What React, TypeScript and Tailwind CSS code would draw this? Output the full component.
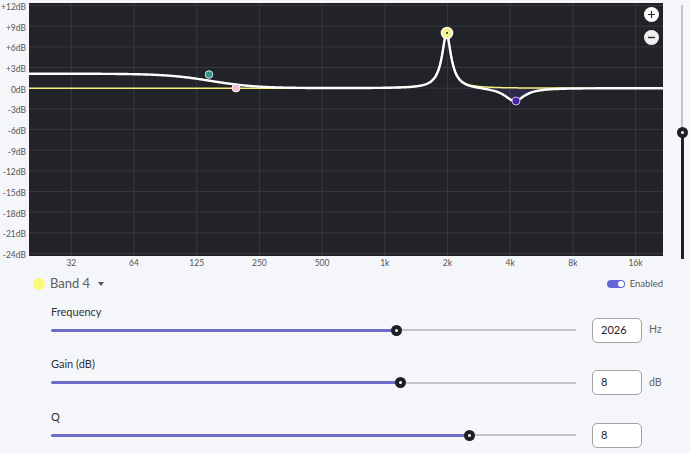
import React from "react";

const FS = 48000;
const W = 634;
const H = 253;

type Coefs = [number, number, number, number, number, number];

function peaking(f0: number, g: number, q: number): Coefs {
  const A = Math.pow(10, g / 40);
  const w0 = (2 * Math.PI * f0) / FS;
  const alpha = Math.sin(w0) / (2 * q);
  const c = Math.cos(w0);
  return [1 + alpha * A, -2 * c, 1 - alpha * A, 1 + alpha / A, -2 * c, 1 - alpha / A];
}

function lowShelf(f0: number, g: number): Coefs {
  const A = Math.pow(10, g / 40);
  const w0 = (2 * Math.PI * f0) / FS;
  const c = Math.cos(w0);
  const alpha = (Math.sin(w0) / 2) * Math.SQRT2;
  const sa = 2 * Math.sqrt(A) * alpha;
  return [
    A * (A + 1 - (A - 1) * c + sa),
    2 * A * (A - 1 - (A + 1) * c),
    A * (A + 1 - (A - 1) * c - sa),
    A + 1 + (A - 1) * c + sa,
    -2 * (A - 1 + (A + 1) * c),
    A + 1 + (A - 1) * c - sa,
  ];
}

function magDb([b0, b1, b2, a0, a1, a2]: Coefs, f: number) {
  const w = (2 * Math.PI * f) / FS;
  const c1 = Math.cos(w), s1 = Math.sin(w);
  const c2 = Math.cos(2 * w), s2 = Math.sin(2 * w);
  const nr = b0 + b1 * c1 + b2 * c2;
  const ni = -(b1 * s1 + b2 * s2);
  const dr = a0 + a1 * c1 + a2 * c2;
  const di = -(a1 * s1 + a2 * s2);
  return 10 * Math.log10((nr * nr + ni * ni) / (dr * dr + di * di));
}

// chart mapping
const xToF = (x: number) => 32 * Math.pow(2, (x - 42.3) / 62.7);
const dbToY = (db: number) => 2.5 + (12 - db) * 6.89;

const bands: Coefs[] = [lowShelf(150, 2.1), peaking(2026, 8, 8), peaking(4300, -1.9, 3.5)];

function curve(filters: Coefs[]) {
  let d = "";
  for (let x = 0; x <= W; x += 1) {
    const f = xToF(x);
    const db = filters.reduce((s, c) => s + magDb(c, f), 0);
    d += (x === 0 ? "M" : "L") + x + " " + dbToY(db).toFixed(2) + " ";
  }
  return d;
}

const dbLabels = ["+12dB", "+9dB", "+6dB", "+3dB", "0dB", "-3dB", "-6dB", "-9dB", "-12dB", "-15dB", "-18dB", "-21dB", "-24dB"];
const freqLabels = ["32", "64", "125", "250", "500", "1k", "2k", "4k", "8k", "16k"];

function Chart() {
  const total = curve(bands);
  const band4 = curve([bands[1]]);
  const purple = curve([bands[2]]);
  return (
    <div className="relative w-[634px] h-[253px] bg-[#212328]">
      <svg width={W} height={H} className="block">
        {dbLabels.map((_, i) => (
          <line key={i} x1={0} x2={W} y1={2.5 + i * 20.67} y2={2.5 + i * 20.67} stroke="#36383d" strokeWidth={1} />
        ))}
        {freqLabels.map((_, i) => (
          <line key={i} x1={42.3 + i * 62.7} x2={42.3 + i * 62.7} y1={0} y2={H} stroke="#36383d" strokeWidth={1} />
        ))}
        <path d={purple + `L${W} ${dbToY(0)} L0 ${dbToY(0)} Z`} fill="#5b3aa6" opacity={0.25} />
        <path d={band4} fill="none" stroke="#f3ef7a" strokeWidth={1.5} />
        <path d={total} fill="none" stroke="#ffffff" strokeWidth={2.4} strokeLinejoin="round" />
        <circle cx={180} cy={71.5} r={3.8} fill="#3b8f8c" stroke="#cfe9e6" strokeWidth={1} />
        <circle cx={207} cy={85} r={4} fill="#f3c1d2" stroke="#ffffff" strokeWidth={0.8} />
        <circle cx={487} cy={98} r={4} fill="#4b20a3" stroke="#c9b8ee" strokeWidth={1} />
        <circle cx={418} cy={30} r={5.6} fill="#f6f28c" stroke="#ffffff" strokeWidth={1.4} />
        <circle cx={418} cy={30} r={1} fill="#222" />
      </svg>
      <div className="absolute top-[3.5px] right-[4.5px] flex flex-col gap-[8px]">
        <button className="w-[15px] h-[15px] rounded-full bg-white flex items-center justify-center">
          <svg width="9" height="9" viewBox="0 0 9 9">
            <path d="M4.5 1v7M1 4.5h7" stroke="#2a2a2a" strokeWidth="1.2" />
          </svg>
        </button>
        <button className="w-[15px] h-[15px] rounded-full bg-[#f0f0f0] flex items-center justify-center">
          <svg width="9" height="9" viewBox="0 0 9 9">
            <path d="M1 4.5h7" stroke="#2a2a2a" strokeWidth="1.4" />
          </svg>
        </button>
      </div>
    </div>
  );
}

function Slider({ label, pct, value, unit }: { label: string; pct: number; value: string; unit?: string }) {
  return (
    <div className="flex flex-col">
      <div className="text-[11px] leading-[12px] text-[#333]">{label}</div>
      <div className="flex items-center h-[25px]">
        <div className="relative w-[525px] h-[3px] flex items-center">
          <div className="h-[3px] bg-[#6b6cc7] rounded-full" style={{ width: `${pct}%` }} />
          <div className="flex-1 h-[2px] bg-[#c5c5c7]" />
          <div
            className="absolute top-[-4px] w-[11px] h-[11px] -ml-[5.5px] rounded-full bg-[#1f2023] flex items-center justify-center"
            style={{ left: `${pct}%` }}
          >
            <div className="w-[3px] h-[3px] rounded-full bg-white" />
          </div>
        </div>
        <div className="ml-[16px] w-[50px] h-[25px] rounded-[5px] border border-[#a3a3a3] bg-white flex items-center pl-[8px] text-[11px] text-[#222]">
          {value}
        </div>
        {unit && <span className="ml-[7px] text-[10.5px] text-[#666]">{unit}</span>}
      </div>
    </div>
  );
}

export default function App() {
  return (
    <div className="w-[690px] h-[453px] overflow-hidden bg-[#f5f6fa] font-['Lato','Liberation_Sans',sans-serif]">
      <div className="flex pt-[3px]">
        <div className="w-[29px] h-[258px] -mt-[1px] flex flex-col justify-between items-end pr-[3px] text-[8.5px] leading-[10px] text-[#555]">
          {dbLabels.map((l) => (
            <span key={l}>{l}</span>
          ))}
        </div>
        <div className="flex flex-col">
          <Chart />
          <div className="flex pl-[11px] mt-[1.7px] text-[8.5px] leading-[10px] text-[#555]">
            {freqLabels.map((l) => (
              <span key={l} className="w-[62.7px] text-center">
                {l}
              </span>
            ))}
          </div>
        </div>
        <div className="flex-1 pl-[14.3px] pt-[2px]">
          <div className="relative w-[2.5px] h-[254px] flex flex-col items-center">
            <div className="w-[2px] h-[127.7px] bg-[#c4c4c6]" />
            <div className="w-[2.5px] flex-1 bg-[#1f2023]" />
            <div className="absolute top-[122.2px] left-[-4.25px] w-[11px] h-[11px] rounded-full bg-[#1f2023] flex items-center justify-center">
              <div className="w-[3px] h-[3px] rounded-full bg-white" />
            </div>
          </div>
        </div>
      </div>

      <div className="mt-[9.3px] h-[14px] flex items-center justify-between pl-[33px] pr-[27px]">
        <div className="flex items-center">
          <div className="w-[12px] h-[12px] rounded-full bg-[#fbfa7c]" />
          <span className="ml-[5px] text-[13px] text-[#5e5e5e]">Band 4</span>
          <svg width="6" height="4" viewBox="0 0 6 4" className="ml-[8px]">
            <path d="M0 0h6L3 4z" fill="#555" />
          </svg>
        </div>
        <div className="flex items-center">
          <div className="w-[18px] h-[8px] rounded-full bg-[#6466d6] flex items-center justify-end pr-[1px]">
            <div className="w-[6px] h-[6px] rounded-full bg-white" />
          </div>
          <span className="ml-[5px] text-[9.5px] text-[#555]">Enabled</span>
        </div>
      </div>

      <div className="mt-[14.7px] pl-[51px] flex flex-col gap-[15.5px]">
        <Slider label="Frequency" pct={65.85} value="2026" unit="Hz" />
        <Slider label="Gain (dB)" pct={66.5} value="8" unit="dB" />
        <Slider label="Q" pct={79.8} value="8" />
      </div>
    </div>
  );
}
